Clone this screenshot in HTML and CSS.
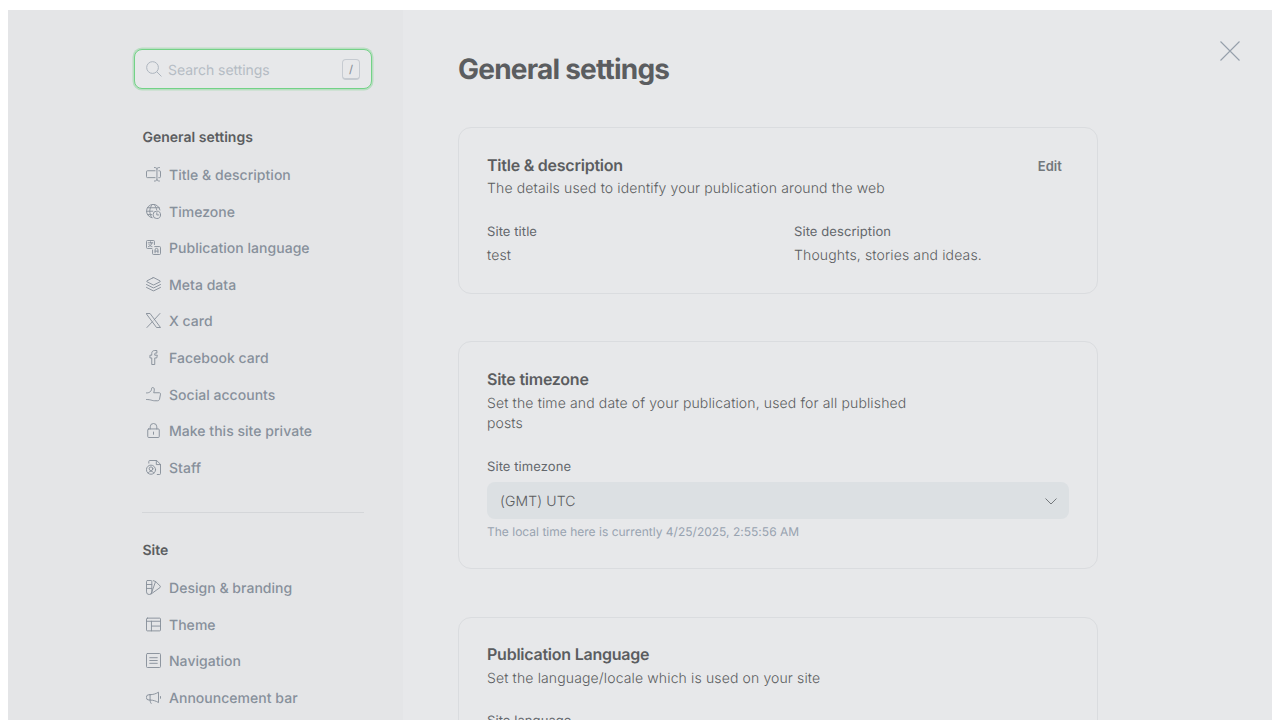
FILE: index.html
```html
<!DOCTYPE html>
<html lang="en">
<head>
<meta charset="utf-8">
<title>Settings</title>
<link rel="stylesheet" href="styles.css">
</head>
<body>
<div class="app">
  <aside class="sidebar">
    <div class="search">
      <svg class="search-icon" viewBox="0 0 24 24"><circle cx="9.8" cy="9.8" r="8.8"/><path d="M16.2 16.2 23.2 23.2"/></svg>
      <span class="search-text">Search settings</span>
      <kbd class="key">/</kbd>
    </div>
    <h2 class="group-title">General settings</h2>
    <ul class="nav">
      <li class="item"><svg class="icon" viewBox="0 0 24 24"><path d="M14.5 6H2.3A1.5 1.5 0 0 0 .8 7.5v8A1.5 1.5 0 0 0 2.3 17h12.2M20.5 6h1.2a1.5 1.5 0 0 1 1.5 1.5v8a1.5 1.5 0 0 1-1.5 1.5h-1.2M17.5 3.5v16M13.5.8c2.4 0 4 .8 4 2.800 0-2 1.600-2.800 4-2.800M13.500 22.500c2.400 0 4-.8 4-2.800 0 2 1.600 2.800 4 2.800"/></svg><span>Title &amp; description</span></li>
      <li class="item"><svg class="icon" viewBox="0 0 24 24"><path d="M9.500 22A10.800 10.800 0 1 1 22.300 9.500M9.500 22C4.500 15 5 6.500 10 .9M13 .9c2 2.200 3.400 4.900 4 8M2.400 6h18.800M.9 11.500h10M2.400 17H9"/><circle cx="17.300" cy="17.300" r="6"/><path d="M17.300 14v3.500h3"/></svg><span>Timezone</span></li>
      <li class="item"><svg class="icon" viewBox="0 0 24 24"><path d="M9.500 13.500H2.300A1.500 1.500 0 0 1 .8 12V2.300A1.500 1.500 0 0 1 2.300.8H12a1.500 1.500 0 0 1 1.500 1.500v5M3.500 4.500h7.300M7.200 2.800v1.700M9.500 4.500c-.5 3-2.500 5-5.500 6M4.800 7.300c1 1.500 2.500 2.600 4.700 3.200M14 10.500h7.700a1.500 1.500 0 0 1 1.500 1.500v9.700a1.500 1.500 0 0 1-1.500 1.500H12a1.500 1.500 0 0 1-1.500-1.500V16M14.500 20.500v-4.800a2.300 2.300 0 0 1 4.600 0v4.800M14.500 17.800h4.600"/></svg><span>Publication language</span></li>
      <li class="item"><svg class="icon" viewBox="0 0 24 24"><path d="M11.200 1.200 1.500 6.200q-1 .7 0 1.400l9.700 4.900q.8.400 1.600 0l9.700-4.900q1-.7 0-1.400l-9.700-5q-.8-.4-1.600 0ZM.8 12l10.400 5.200q.8.400 1.600 0L23.200 12M.8 16.700l10.400 5.200q.8.400 1.600 0l10.400-5.200"/></svg><span>Meta data</span></li>
      <li class="item"><svg class="icon" viewBox="0 0 24 24"><path d="M.8.8h5.700l16.700 22.400h-5.700ZM22.300.8l-9.500 10.400M10.200 14 1.500 23.200"/></svg><span>X card</span></li>
      <li class="item"><svg class="icon" viewBox="0 0 24 24"><path d="M17.500 8.300H14V6.100c0-.8.500-1.200 1.200-1.200h2.200V.8H14c-3.300 0-4.800 2-4.800 4.700v2.800H6.300v4.400h2.900v10.500H14V12.700h2.600Z"/></svg><span>Facebook card</span></li>
      <li class="item"><svg class="icon" viewBox="0 0 24 24"><path d="M.8 9.500c5.800 0 8-3 8.200-7.300 0-2 3.800-1.800 4.200.7.300 2.300-.2 4.500-.9 6.300h8.900c1.300 0 2.200 1 2 2.200l-1.600 8.200c-.3 1.500-1.500 2.400-3 2.400H14c-5 0-5.500-2-13.200-2"/></svg><span>Social accounts</span></li>
      <li class="item"><svg class="icon" viewBox="0 0 24 24"><rect x="2.800" y="9.500" width="18.400" height="13.700" rx="1.500"/><path d="M6.700 9.500V6.100a5.300 5.300 0 0 1 10.600 0v3.400M12 14.500v3.500"/></svg><span>Make this site private</span></li>
      <li class="item"><svg class="icon" viewBox="0 0 24 24"><path d="M4.500 5V2.300A1.500 1.500 0 0 1 6 .8h11l6.200 6v14.900a1.500 1.500 0 0 1-1.500 1.500H18M16.500.8v6.500h6.700"/><circle cx="8" cy="15.500" r="7.300"/><circle cx="8" cy="14" r="3"/><path d="M3.500 20.700c2-3.600 7-3.600 9 0"/></svg><span>Staff</span></li>
    </ul>
    <hr class="rule">
    <h2 class="group-title">Site</h2>
    <ul class="nav">
      <li class="item"><svg class="icon" viewBox="0 0 24 24"><path d="M2.300.8h5.500a1.500 1.500 0 0 1 1.500 1.500V19a4.200 4.200 0 0 1-8.500 0V2.300A1.500 1.500 0 0 1 2.300.8ZM.8 7.200h8.500M.8 13.500h8.500M11.500 1l4 1.500 7 7q1 1.200 0 2.500L8 22.500M8.500 21.500 15.300 2.500"/></svg><span>Design &amp; branding</span></li>
      <li class="item"><svg class="icon" viewBox="0 0 24 24"><rect x=".8" y="1.800" width="22.400" height="20.400" rx="1.500"/><path d="M.8 6.800h22.400M8.700 6.800v15.400M8.700 14.500h14.500"/></svg><span>Theme</span></li>
      <li class="item"><svg class="icon" viewBox="0 0 24 24"><rect x=".8" y=".8" width="22.400" height="22.400" rx="1.500"/><path d="M6 7.500h12M6 12h12M6 16.500h12"/></svg><span>Navigation</span></li>
      <li class="item"><svg class="icon" viewBox="0 0 24 24"><path d="M6.500 7.500H4.800a4.300 4.300 0 0 0 0 8.600h1.700M6.500 7.500v8.600c5 0 9.500 1.500 13.500 4V3.500c-4 2.500-8.500 4-13.500 4ZM23.200 10.500v2.700M6.500 16.100c0 2 .5 4 1.700 5.400"/></svg><span>Announcement bar</span></li>
    </ul>
  </aside>
  <main class="main">
    <svg class="close" viewBox="0 0 20 20"><path d="M.5.500l19 19M19.500.500l-19 19"/></svg>
    <h1 class="page-title">General settings</h1>
    <section class="card card-title">
      <header class="card-head"><h3 class="card-name">Title &amp; description</h3><button class="edit">Edit</button></header>
      <p class="desc">The details used to identify your publication around the web</p>
      <div class="fields">
        <div><div class="label">Site title</div><div class="value">test</div></div>
        <div><div class="label">Site description</div><div class="value">Thoughts, stories and ideas.</div></div>
      </div>
    </section>
    <section class="card card-zone">
      <h3 class="card-name">Site timezone</h3>
      <p class="desc">Set the time and date of your publication, used for all published posts</p>
      <div class="label zone-label">Site timezone</div>
      <div class="select"><span>(GMT) UTC</span><svg class="chevron" viewBox="0 0 12 7"><path d="M.5.500 6 6 11.500.500"/></svg></div>
      <div class="hint">The local time here is currently 4/25/2025, 2:55:56 AM</div>
    </section>
    <section class="card card-lang">
      <h3 class="card-name">Publication Language</h3>
      <p class="desc">Set the language/locale which is used on your site</p>
      <div class="label lang-label">Site language</div>
    </section>
  </main>
</div>
</body>
</html>
```
FILE: styles.css
```css
* { box-sizing: border-box; }
body { margin: 0; height: 720px; overflow: hidden; display: flow-root; background: #fff; font-family: Inter, "Liberation Sans", sans-serif; color: #5b5d60; text-rendering: geometricPrecision; }
h1, h2, h3, p, ul { margin: 0; padding: 0; }
svg { fill: none; stroke: currentColor; flex: none; }
.app { height: 710px; margin: 10px 8px 0; display: flex; overflow: hidden; background: #e7e8ea; }
.sidebar { width: 395px; flex: none; padding: 39px 31px 0 126px; background: #e4e5e7; }
.search { height: 40px; display: flex; align-items: center; padding: 0 11px; border: 1px solid #73d287; border-radius: 8px; background: #e7e8ea; box-shadow: 0 0 0 1.5px #b9dec2; color: #b5bcc4; }
.search-icon { width: 16px; height: 16px; stroke-width: 1.5; stroke: #adb5be; }
.search-text { margin-left: 6px; font-size: 14px; line-height: 20px; padding-top: 3px; letter-spacing: -.05px; flex: 1; }
.key { width: 18px; height: 21px; border: 1px solid #c6cbd1; border-bottom-width: 2px; border-radius: 4px; font: 500 11px/18px Inter, sans-serif; text-align: center; color: #8b929a; }
.group-title { margin: 39px 0 0 8.5px; font-size: 14px; line-height: 20px; font-weight: 600; }
.nav { list-style: none; margin: 9.5px 0 0 12px; }
.item { height: 36.55px; display: flex; align-items: center; gap: 7.5px; font-size: 14px; font-weight: 500; color: #87909b; letter-spacing: .03px; white-space: nowrap; }
.icon { width: 15px; height: 15px; stroke-width: 1.5; stroke-linecap: round; stroke-linejoin: round; position: relative; top: -1px; }
.item span { padding-left: .5px; }
.rule { height: 1px; margin: 25.5px 8px 0; border: 0; background: #d4d6d9; }
.rule + .group-title { margin-top: 28px; }
.main { flex: 1; position: relative; padding: 41px 174px 0 55px; }
.close { position: absolute; top: 31px; right: 32px; width: 20px; height: 20px; stroke: #96a0ab; stroke-width: 1.1; }
.page-title { height: 36px; font-size: 28px; line-height: 37px; font-weight: 700; letter-spacing: -.77px; }
.card { border: 1px solid #dadcdf; border-radius: 13px; padding: 26px 28px 0; }
.card-title { height: 167px; margin-top: 40px; }
.card-zone { height: 228px; margin-top: 47px; }
.card-lang { height: 240px; margin-top: 48px; padding-top: 25px; }
.card-head { display: flex; justify-content: space-between; }
.card-name { font-size: 16px; line-height: 22px; font-weight: 600; letter-spacing: -.24px; }
.edit { border: 0; padding: 1px 7px 0 0; background: none; font: 600 13px/22px Inter, sans-serif; height: 23px; margin-bottom: -1px; color: #72777c; letter-spacing: .08px; }
.desc { width: 440px; margin-top: 3px; font-size: 14px; line-height: 20px; font-weight: 300; letter-spacing: .135px; }
.card-zone .desc, .card-lang .desc { margin-top: 4px; }
.fields { display: grid; grid-template-columns: 1fr 1fr; column-gap: 32px; margin-top: 23px; }
.label { font-size: 13px; line-height: 20px; letter-spacing: .08px; color: #63676c; }
.value { margin-top: 4px; font-size: 14px; line-height: 20px; font-weight: 300; letter-spacing: .14px; }
.zone-label { margin-top: 23px; }
.select { height: 37px; margin-top: 5px; display: flex; align-items: center; justify-content: space-between; padding: 2px 12.5px 0 13px; border-radius: 8px; background: #dce0e3; font-size: 14px; font-weight: 300; letter-spacing: .12px; }
.chevron { width: 12px; height: 7px; stroke-width: 1; color: #74787c; }
.hint { margin-top: 3px; font-size: 12px; line-height: 20px; letter-spacing: .01px; color: #98a3b0; }
.lang-label { margin-top: 22px; }
```
